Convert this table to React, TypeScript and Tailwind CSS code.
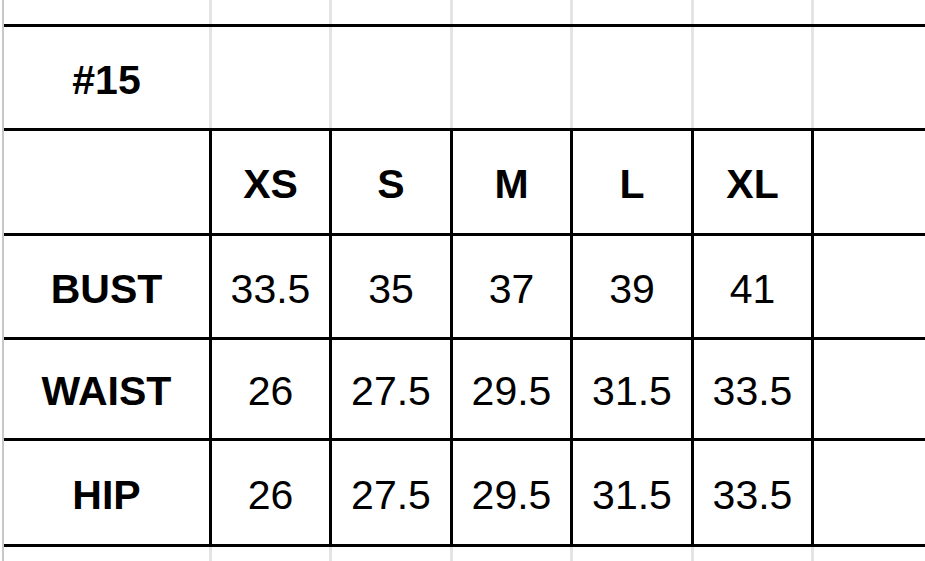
import React from 'react';

// column widths, each including its 3px right border
const colWidths = ['w-[208px]', 'w-[120px]', 'w-[121px]', 'w-[120px]', 'w-[121px]', 'w-[120px]'];

interface Row {
    height: string;
    cells: string[];
    grid: 'gray' | 'black';
    bottom: boolean;
    bold?: boolean;
}

const sizes = ['', 'XS', 'S', 'M', 'L', 'XL', ''];

const rows: Row[] = [
    { height: 'h-[27px]', cells: ['', '', '', '', '', '', ''], grid: 'gray', bottom: true },
    { height: 'h-[104px]', cells: ['#15', '', '', '', '', '', ''], grid: 'gray', bottom: true },
    { height: 'h-[105px]', cells: sizes, grid: 'black', bottom: true },
    { height: 'h-[104px]', cells: ['BUST', '33.5', '35', '37', '39', '41', ''], grid: 'black', bottom: true },
    { height: 'h-[101px]', cells: ['WAIST', '26', '27.5', '29.5', '31.5', '33.5', ''], grid: 'black', bottom: true },
    { height: 'h-[106px]', cells: ['HIP', '26', '27.5', '29.5', '31.5', '33.5', ''], grid: 'black', bottom: true },
    { height: 'h-[20px]', cells: ['', '', '', '', '', '', ''], grid: 'gray', bottom: false },
];

const SizeChart: React.FC = () => {
    return (
        <div className="h-[561px] w-[925px] overflow-hidden bg-white">
            <div
                className="ml-[2px] border-l-2 border-[#c8c8c8] text-[41px] leading-none text-black"
                style={{ fontFamily: '"Liberation Sans", Arial, sans-serif' }}
            >
                {rows.map((row, ri) => (
                    <div
                        key={ri}
                        className={`box-border flex ${row.height} ${row.bottom ? 'border-b-[3px] border-black' : ''}`}
                    >
                        {row.cells.map((cell, ci) => {
                            const last = ci === row.cells.length - 1;
                            const header = ci === 0 || ri === 2;
                            return (
                                <div
                                    key={ci}
                                    className={`box-border flex shrink-0 items-center justify-center pt-[5px] ${
                                        last ? 'flex-1' : colWidths[ci]
                                    } ${
                                        last
                                            ? ''
                                            : row.grid === 'black' && ci >= 0
                                              ? 'border-r-[3px] border-r-black'
                                              : 'border-r-[3px] border-r-[#e4e4e4]'
                                    } ${header ? 'font-bold' : 'font-normal'}`}
                                >
                                    {cell}
                                </div>
                            );
                        })}
                    </div>
                ))}
            </div>
        </div>
    );
};

export default function App() {
    return <SizeChart />;
}
